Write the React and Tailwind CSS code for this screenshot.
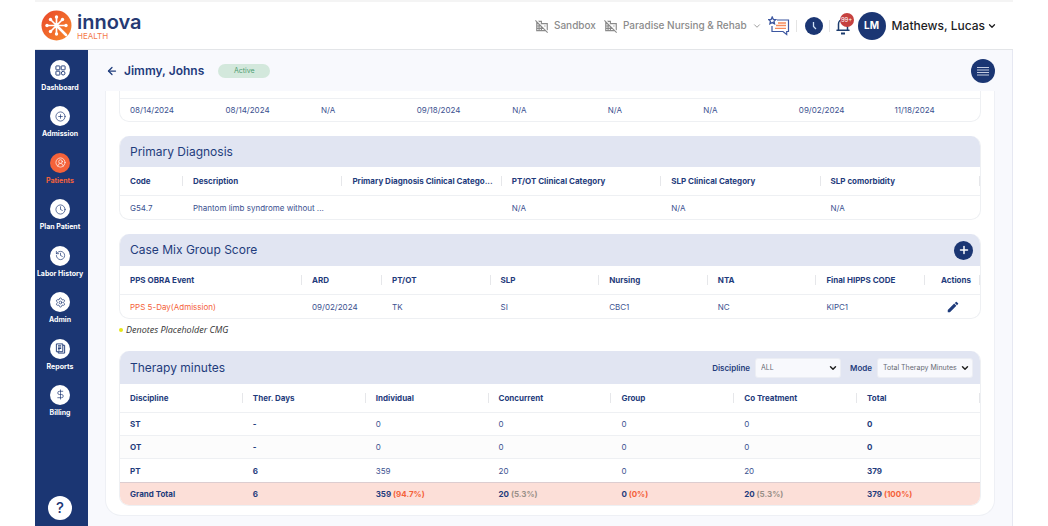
import React from 'react';
import { ArrowLeft, ChevronDown, Clock, History, Plus, CirclePlus, CircleUserRound, Settings, DollarSign } from 'lucide-react';
import { MdDomainDisabled, MdEdit } from 'react-icons/md';

// ─── Data ─────────────────────────────────────────────────────────────────────
const NAV = [
    { label: 'Dashboard', icon: DashboardIcon },
    { label: 'Admission', icon: CirclePlus },
    { label: 'Patients', icon: CircleUserRound, active: true },
    { label: 'Plan Patient', icon: Clock },
    { label: 'Labor History', icon: History },
    { label: 'Admin', icon: Settings },
    { label: 'Reports', icon: ReportIcon },
    { label: 'Billing', icon: DollarSign },
];

const STAY_DATES = ['08/14/2024', '08/14/2024', 'N/A', '09/18/2024', 'N/A', 'N/A', 'N/A', '09/02/2024', '11/18/2024'];

const DIAGNOSIS_COLS = [
    { label: 'Code', width: 'w-[63px]' },
    { label: 'Description' },
    { label: 'Primary Diagnosis Clinical Catego...' },
    { label: 'PT/OT Clinical Category' },
    { label: 'SLP Clinical Category' },
    { label: 'SLP comorbidity' },
];

const CMG_COLS = [
    { label: 'PPS OBRA Event', width: 'w-[182px]' },
    { label: 'ARD', width: 'w-[80px]' },
    { label: 'PT/OT' },
    { label: 'SLP' },
    { label: 'Nursing' },
    { label: 'NTA' },
    { label: 'Final HIPPS CODE' },
    { label: 'Actions', width: 'w-[55px]', center: true },
];

const THERAPY_COLS = ['Discipline', 'Ther. Days', 'Individual', 'Concurrent', 'Group', 'Co Treatment', 'Total'].map(label => ({ label }));

const THERAPY_ROWS = [
    ['ST', '-', '0', '0', '0', '0', '0'],
    ['OT', '-', '0', '0', '0', '0', '0'],
    ['PT', '6', '359', '20', '0', '20', '379'],
];

const TOTALS = [
    { value: 'Grand Total' },
    { value: '6' },
    { value: '359', pct: '(94.7%)', color: 'text-[#f4623a]' },
    { value: '20', pct: '(5.3%)', color: 'text-[#9a9088]' },
    { value: '0', pct: '(0%)', color: 'text-[#f4623a]' },
    { value: '20', pct: '(5.3%)', color: 'text-[#9a9088]' },
    { value: '379', pct: '(100%)', color: 'text-[#f4623a]' },
];

// ─── Icons ────────────────────────────────────────────────────────────────────
function DashboardIcon({ className }) {
    return (
        <svg className={className} viewBox="0 0 24 24" fill="none" stroke="currentColor" strokeWidth="2">
            <rect x="2" y="2" width="8.5" height="8.5" rx="1" />
            <rect x="13.5" y="2" width="8.5" height="8.5" rx="1" />
            <rect x="2" y="13.5" width="8.5" height="8.5" rx="1" />
            <circle cx="17.8" cy="17.8" r="4" />
        </svg>
    );
}

function ReportIcon({ className }) {
    return (
        <svg className={className} viewBox="0 0 24 24" fill="none" stroke="currentColor" strokeWidth="2">
            <path d="M3 2h14v17H3z" />
            <path d="M17 5h4v17H7v-3" />
            <path d="M6.5 6h7M6.5 9h7M6.5 12h7M6.5 15h4" />
        </svg>
    );
}

function LogoMark() {
    return (
        <svg className="size-[31px]" viewBox="0 0 62 62">
            <defs>
                <linearGradient id="logo" x1="0" y1="0" x2="1" y2="1">
                    <stop offset="0" stopColor="#e8472b" />
                    <stop offset="1" stopColor="#f98a2c" />
                </linearGradient>
            </defs>
            <circle cx="31" cy="31" r="30" fill="url(#logo)" />
            <g stroke="#fff" strokeWidth="3.4" strokeLinecap="round">
                <path d="M31 31V15M31 31v16M31 31H13M31 31h18M31 31 20 20M31 31l11-11M31 31 20 42" />
                <path d="m31 31 19 19" strokeWidth="5" />
            </g>
            <g fill="#fff">
                <circle cx="31" cy="14" r="3.4" />
                <circle cx="31" cy="48" r="3.4" />
                <circle cx="12" cy="31" r="3.4" />
                <circle cx="50" cy="31" r="3.4" />
                <circle cx="19" cy="19" r="3.4" />
                <circle cx="43" cy="19" r="3.4" />
                <circle cx="19" cy="43" r="3.4" />
            </g>
        </svg>
    );
}

function FeedbackIcon() {
    return (
        <svg className="h-[20px] w-[22px]" viewBox="0 0 22 20" fill="none">
            <path d="M9 4h11.5v11.5h-1.8v3L15 15.5H4V10" stroke="#3d57a0" strokeWidth="1.2" />
            <path d="M10 7h8M8 9.5h10M7 12.3h11" stroke="#f58a5b" strokeWidth="1.3" />
            <path d="m4.2 1 1.1 2.3 2.5.3-1.8 1.7.5 2.5-2.3-1.2-2.3 1.2.5-2.5L.7 3.6l2.5-.3z" stroke="#3d57a0" strokeWidth="1.3" />
        </svg>
    );
}

function BellIcon() {
    return (
        <svg className="h-[18px] w-[14px]" viewBox="0 0 14 18" fill="none" stroke="#1d3c6e" strokeWidth="1.5">
            <path d="M2.5 13V7a4.500 4.500 0 0 1 9 0v6M1 13.3h12" strokeLinecap="round" />
            <path d="M5 16.500h4" strokeWidth="2" />
        </svg>
    );
}

function MenuLines() {
    return (
        <svg className="h-[10px] w-[12px]" viewBox="0 0 12 10" stroke="#c3cbe0" strokeWidth="1">
            <path d="M0 1.500h12M0 4h12M0 6.500h12M0 9h12" />
        </svg>
    );
}

// ─── Header ───────────────────────────────────────────────────────────────────
function Header() {
    return (
        <header className="flex h-[50px] items-center justify-between border-t-2 border-b border-t-[#f4f4f4] border-b-[#e3e5e8] bg-white pr-4 pl-1.5">
            <a href="#home" className="flex items-center gap-[5px]">
                <LogoMark />
                <span className="flex flex-col">
                    <span className="text-[20px] leading-[20px] font-semibold text-[#263a73]">innova</span>
                    <span className="text-[8px] leading-[8px] text-[#f47a4a]">HEALTH</span>
                </span>
            </a>
            <div className="flex items-center">
                <div className="flex items-center gap-2 text-[10px] font-medium text-[#8b8b8b]">
                    <span className="flex items-center gap-[5px]"><MdDomainDisabled className="size-[14px]" />Sandbox</span>
                    <button className="flex items-center gap-[5px]">
                        <MdDomainDisabled className="size-[14px]" />
                        Paradise Nursing &amp; Rehab
                        <ChevronDown className="size-[10px]" />
                    </button>
                </div>
                <button aria-label="Feedback" className="ml-1.5"><FeedbackIcon /></button>
                <span className="mx-1.5 h-3 w-px bg-[#e4e4e4]" />
                <button aria-label="Time clock" className="ml-0.5 flex size-[18px] items-center justify-center rounded-full bg-[#1b3673]">
                    <svg className="size-[14px]" viewBox="0 0 14 14" fill="none" stroke="#cfe0f5" strokeWidth="1.3"><path d="M6.5 3v4.500L9 10" /></svg>
                </button>
                <span className="mx-1.5 h-3 w-px bg-[#e4e4e4]" />
                <button aria-label="Notifications" className="relative mr-2">
                    <BellIcon />
                    <span className="absolute -top-1 left-1 flex size-[14px] items-center justify-center rounded-full bg-[#c6413f] text-[6px] text-white">99+</span>
                </button>
                <span className="flex size-[28px] items-center justify-center rounded-full bg-[#1b3673] text-[10px] font-bold text-white">LM</span>
                <button className="ml-1.5 flex items-center gap-0.5 text-[12px] font-medium text-[#1d1d1f]">
                    Mathews, Lucas
                    <ChevronDown className="size-[10px]" strokeWidth={3} />
                </button>
            </div>
        </header>
    );
}

// ─── Sidebar ──────────────────────────────────────────────────────────────────
function Sidebar() {
    return (
        <aside className="flex w-[53px] shrink-0 flex-col items-center justify-between bg-[#1b3673] pt-2.5 pr-[3px] pb-1.5">
            <nav className="flex h-[359px] flex-col justify-between">
                {NAV.map(({ label, icon: Icon, active }) => (
                    <a
                        key={label}
                        href={`#${label}`}
                        className={`flex flex-col items-center gap-0.5 text-[7px] leading-[12px] font-bold whitespace-nowrap ${active ? 'text-[#f4623a]' : 'text-white'}`}
                    >
                        <span className={`flex size-[20px] items-center justify-center rounded-full ${active ? 'bg-[#f4623a] text-white' : 'bg-white text-[#1b3673]'}`}>
                            <Icon className="size-[11px]" strokeWidth={1.5} />
                        </span>
                        {label}
                    </a>
                ))}
            </nav>
            <button aria-label="Help" className="flex size-[24px] items-center justify-center rounded-full bg-white text-[15px] font-medium text-[#1b3673]">?</button>
        </aside>
    );
}

// ─── Tables ───────────────────────────────────────────────────────────────────
function Panel({ title, height, children, actions }) {
    return (
        <section className="overflow-hidden rounded-[10px] border-x border-b border-[#eef0f3] bg-white">
            <div className={`flex items-center justify-between bg-[#e1e5f2] pr-[7px] pl-2.5 ${height}`}>
                <h2 className="text-[12px]">{title}</h2>
                {actions}
            </div>
            {children}
        </section>
    );
}

function TableHead({ cols }) {
    return (
        <thead>
            <tr>
                {cols.map(col => (
                    <th key={col.label} scope="col" className={`h-[29px] border-b border-[#eef0f3] p-0 text-[8px] font-bold ${col.width || ''}`}>
                        <div className={`truncate border-r border-[#e6e7ea] leading-[10px] ${col.center ? 'pl-2 text-center' : 'pr-1 pl-2.5 text-left'}`}>{col.label}</div>
                    </th>
                ))}
            </tr>
        </thead>
    );
}

function Cell({ children, className = 'text-[#3b5190]' }) {
    return <td className={`h-[23px] truncate py-0 pr-1 pl-2.5 text-[8px] ${className}`}>{children}</td>;
}

function Table({ children }) {
    return <table className="w-full table-fixed border-separate border-spacing-0">{children}</table>;
}

function SelectBox({ id, label, options, width }) {
    return (
        <div className="flex items-center gap-[5px]">
            <label htmlFor={id} className="text-[8px] font-semibold">{label}</label>
            <div className={`relative ${width}`}>
                <select id={id} className="block h-[20px] w-full appearance-none rounded-[3px] border border-[#eceef4] bg-[#f8f9fd] pt-0.5 pl-[5px] text-[7px] text-[#666a73]">
                    {options.map(o => <option key={o}>{o}</option>)}
                </select>
                <ChevronDown className="pointer-events-none absolute top-[5px] right-[3px] size-[10px] text-[#222]" strokeWidth={3.5} />
            </div>
        </div>
    );
}

// ─── Page ─────────────────────────────────────────────────────────────────────
export default function App() {
    return (
        <div className="flex min-h-screen flex-col bg-white px-[35px] font-['Inter',sans-serif] text-[#1f3c7c]">
            <Header />
            <div className="flex flex-1">
                <Sidebar />
                <main className="min-w-0 flex-1 border-r border-[#e6e8f2] bg-[#f8f9fd] px-[17px]">
                    <div className="flex h-[41px] items-center">
                        <button aria-label="Back" className="ml-px"><ArrowLeft className="size-[12px]" strokeWidth={2.5} /></button>
                        <h1 className="ml-1.5 text-[12px] font-semibold">Jimmy, Johns</h1>
                        <span className="ml-3.5 flex h-[14px] w-[52px] items-center justify-center rounded-full bg-[#d3e8dc] text-[7px] leading-[14px] text-[#4f9d72]">Active</span>
                        <button aria-label="Menu" className="ml-auto flex size-[24px] items-center justify-center rounded-full bg-[#1b3673]">
                            <MenuLines />
                        </button>
                    </div>

                    <div className="rounded-b-[16px] border-x border-b border-[#eef0f5] bg-white px-[13px] pb-[9px]">
                        <div className="overflow-hidden rounded-b-[10px] border-x border-b border-[#eef0f3] pt-[7px]">
                            <Table>
                                <tbody>
                                    <tr>
                                        {STAY_DATES.map((d, i) => <Cell key={i} className="border-t border-[#eef0f3] text-[#3b5190]">{d}</Cell>)}
                                    </tr>
                                </tbody>
                            </Table>
                        </div>

                        <div className="mt-3.5">
                            <Panel title="Primary Diagnosis" height="h-[31px]">
                                <Table>
                                    <TableHead cols={DIAGNOSIS_COLS} />
                                    <tbody>
                                        <tr>
                                            <Cell>G54.7</Cell>
                                            <Cell>Phantom limb syndrome without ...</Cell>
                                            <Cell />
                                            <Cell>N/A</Cell>
                                            <Cell>N/A</Cell>
                                            <Cell>N/A</Cell>
                                        </tr>
                                    </tbody>
                                </Table>
                            </Panel>
                        </div>

                        <div className="mt-3.5">
                            <Panel
                                title="Case Mix Group Score"
                                height="h-[32px]"
                                actions={
                                    <button aria-label="Add score" className="flex size-[19px] items-center justify-center rounded-full bg-[#1b3673] text-white">
                                        <Plus className="size-[12px]" strokeWidth={3} />
                                    </button>
                                }
                            >
                                <Table>
                                    <TableHead cols={CMG_COLS} />
                                    <tbody>
                                        <tr>
                                            <Cell><a href="#pps" className="text-[#f4623a]">PPS 5-Day(Admission)</a></Cell>
                                            <Cell>09/02/2024</Cell>
                                            <Cell>TK</Cell>
                                            <Cell>SI</Cell>
                                            <Cell>CBC1</Cell>
                                            <Cell>NC</Cell>
                                            <Cell>KIPC1</Cell>
                                            <td className="p-0"><button aria-label="Edit" className="mx-auto block"><MdEdit className="size-[14px]" /></button></td>
                                        </tr>
                                    </tbody>
                                </Table>
                            </Panel>
                        </div>

                        <p className="flex h-[22px] items-center gap-[3px] font-['Open_Sans',sans-serif] text-[9px] text-[#333] italic">
                            <span className="size-[4px] rounded-full bg-[#e6e619]" />
                            Denotes Placeholder CMG
                        </p>

                        <div className="mt-2.5">
                            <Panel
                                title="Therapy minutes"
                                height="h-[33px]"
                                actions={
                                    <div className="flex items-center gap-[9px]">
                                        <SelectBox id="discipline" label="Discipline" options={['ALL', 'ST', 'OT', 'PT']} width="w-[86px]" />
                                        <SelectBox id="mode" label="Mode" options={['Total Therapy Minutes']} width="w-[96px]" />
                                    </div>
                                }
                            >
                                <Table>
                                    <TableHead cols={THERAPY_COLS} />
                                    <tbody>
                                        {THERAPY_ROWS.map((row, r) => (
                                            <tr key={row[0]} className={r === 1 ? 'bg-[#fcfcfc]' : ''}>
                                                {row.map((v, i) => (
                                                    <Cell key={i} className={`${i < 2 || i === 6 ? 'font-bold' : 'text-[#3b5190]'} ${r < 2 ? 'border-b border-[#eef0f3]' : ''}`}>{v}</Cell>
                                                ))}
                                            </tr>
                                        ))}
                                    </tbody>
                                    <tfoot>
                                        <tr className="bg-[#fcdfd8]">
                                            {TOTALS.map((t, i) => (
                                                <Cell key={i} className="border-t border-[#dccdd0] font-bold">
                                                    {t.value} {t.pct && <span className={t.color}>{t.pct}</span>}
                                                </Cell>
                                            ))}
                                        </tr>
                                    </tfoot>
                                </Table>
                            </Panel>
                        </div>
                    </div>
                </main>
            </div>
        </div>
    );
}
